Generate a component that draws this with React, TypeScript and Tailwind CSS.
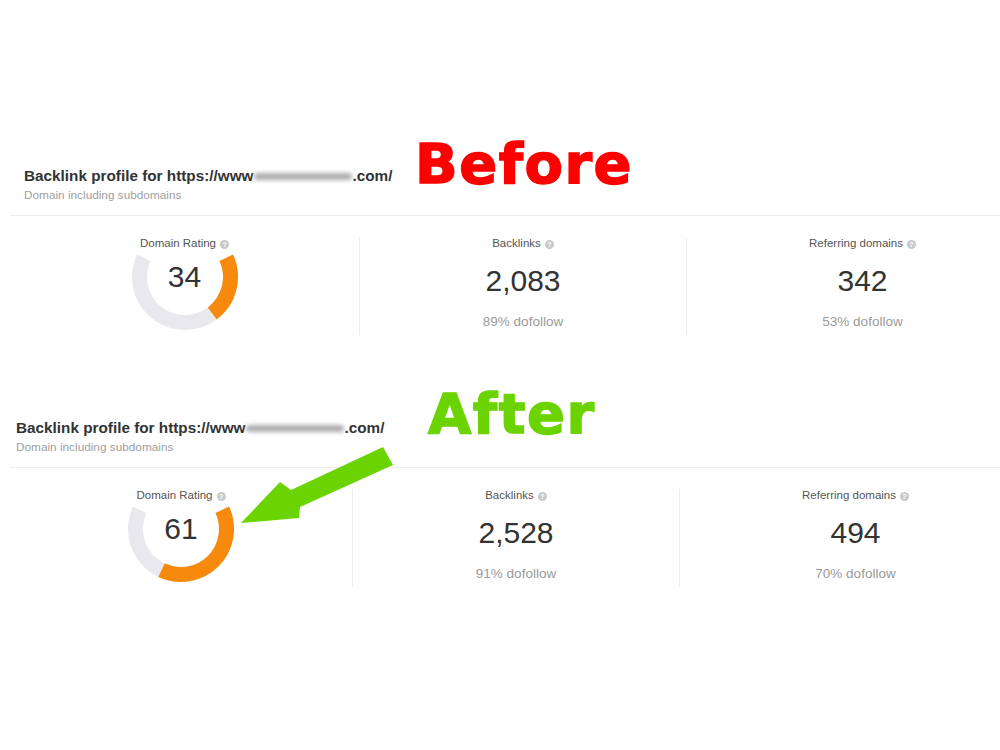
type Snapshot = {
  tag: string
  tagColor: string
  headerPad: string
  titleWidth: string
  titleTop: string
  colWidths: [string, string, string]
  rating: number
  backlinks: string
  backlinksDofollow: string
  domains: string
  domainsDofollow: string
}

const snapshots: Snapshot[] = [
  {
    tag: 'Before',
    tagColor: 'text-[#fd0000] [-webkit-text-stroke:1.5px_#fd0000]',
    headerPad: 'pl-[14px]',
    titleWidth: 'w-[391px]',
    titleTop: 'mt-[30px]',
    colWidths: ['w-[349px]', 'w-[327px]', 'w-[352px]'],
    rating: 34,
    backlinks: '2,083',
    backlinksDofollow: '89% dofollow',
    domains: '342',
    domainsDofollow: '53% dofollow',
  },
  {
    tag: 'After',
    tagColor: 'text-[#6bd400] [-webkit-text-stroke:1.5px_#6bd400]',
    headerPad: 'pl-[6px]',
    titleWidth: 'w-[412px]',
    titleTop: 'mt-[32px]',
    colWidths: ['w-[342px]', 'w-[327px]', 'w-[352px]'],
    rating: 61,
    backlinks: '2,528',
    backlinksDofollow: '91% dofollow',
    domains: '494',
    domainsDofollow: '70% dofollow',
  },
]

// gauge runs 230° from the upper right, clockwise round the bottom, to the upper left
const START = -25
const SWEEP = 230

function point(cx: number, cy: number, r: number, deg: number) {
  const a = (deg * Math.PI) / 180
  return [cx + r * Math.cos(a), cy + r * Math.sin(a)]
}

function arc(cx: number, cy: number, r: number, from: number, to: number) {
  const [x0, y0] = point(cx, cy, r, from)
  const [x1, y1] = point(cx, cy, r, to)
  const large = to - from > 180 ? 1 : 0
  return `M ${x0} ${y0} A ${r} ${r} 0 ${large} 1 ${x1} ${y1}`
}

function HelpDot() {
  return (
    <span className="inline-flex w-[9px] h-[9px] rounded-full bg-[#c9c9c9] items-center justify-center text-[7px] leading-none font-bold text-white">
      ?
    </span>
  )
}

function StatLabel({ children }: { children: string }) {
  return (
    <div className="flex items-center justify-center gap-[4px] h-[14px] text-[11.5px] text-[#555]">
      <span>{children}</span>
      <HelpDot />
    </div>
  )
}

function RatingGauge({ value }: { value: number }) {
  const cx = 55
  const cy = 26
  const r = 45.5
  return (
    <div className="relative w-[110px] h-[82px] mx-auto">
      <svg width="110" height="82" viewBox="0 0 110 82">
        <path d={arc(cx, cy, r, START, START + SWEEP)} fill="none" stroke="#e9e9ed" strokeWidth="15" />
        <path
          d={arc(cx, cy, r, START, START + (SWEEP * value) / 100)}
          fill="none"
          stroke="#f7890c"
          strokeWidth="15"
        />
      </svg>
      <div className="absolute left-0 right-0 top-[11px] h-[30px] text-center text-[30px] leading-[30px] text-[#333]">
        {value}
      </div>
    </div>
  )
}

function CountStat({ label, value, note }: { label: string; value: string; note: string }) {
  return (
    <>
      <StatLabel>{label}</StatLabel>
      <div className="mt-[15px] text-center text-[30px] leading-[30px] text-[#333]">{value}</div>
      <div className="mt-[18px] text-center text-[13.5px] leading-[16px] text-[#9a9a9a]">{note}</div>
    </>
  )
}

function ProfileCard({ s }: { s: Snapshot }) {
  return (
    <section className="ml-[10px]">
      <div className={`flex items-start ${s.headerPad}`}>
        <div className={`${s.titleWidth} shrink-0 ${s.titleTop}`}>
          <div className="flex items-center h-[18px] text-[15.3px] font-bold text-[#333] whitespace-nowrap">
            <span>Backlink profile for https://www</span>
            <span className="inline-block w-[98px] h-[7px] ml-[1px] rounded-full bg-[#acacac] blur-[2px]" />
            <span>.com/</span>
          </div>
          <div className="mt-[3px] h-[14px] text-[11.8px] leading-[14px] text-[#a0a0a0]">
            Domain including subdomains
          </div>
        </div>
        <div
          className={`font-['DejaVu_Sans',sans-serif] font-bold text-[56px] leading-[54px] tracking-[1.5px] ${s.tagColor}`}
        >
          {s.tag}
        </div>
      </div>

      <div className="mt-[13px] border-t border-[#ededed] pt-[21px] flex">
        <div className={`${s.colWidths[0]} shrink-0 h-[98px]`}>
          <StatLabel>Domain Rating</StatLabel>
          <RatingGauge value={s.rating} />
        </div>
        <div className={`${s.colWidths[1]} shrink-0 h-[98px] border-l border-[#ececec]`}>
          <CountStat label="Backlinks" value={s.backlinks} note={s.backlinksDofollow} />
        </div>
        <div className={`${s.colWidths[2]} shrink-0 h-[98px] border-l border-[#ececec]`}>
          <CountStat label="Referring domains" value={s.domains} note={s.domainsDofollow} />
        </div>
      </div>
    </section>
  )
}

export default function App() {
  return (
    <div className="relative w-[1000px] h-[750px] overflow-hidden bg-white pt-[137px] font-['Liberation_Sans',Arial,sans-serif]">
      <ProfileCard s={snapshots[0]} />
      <div className="mt-[52px]">
        <ProfileCard s={snapshots[1]} />
      </div>

      {/* pointer from the "After" tag down to the new rating */}
      <svg className="absolute left-0 top-0 pointer-events-none" width="1000" height="750">
        <polygon
          points="241,523 280,482 291,490 383,447 393,465 300,507 299,518"
          fill="#6bd400"
        />
      </svg>
    </div>
  )
}
